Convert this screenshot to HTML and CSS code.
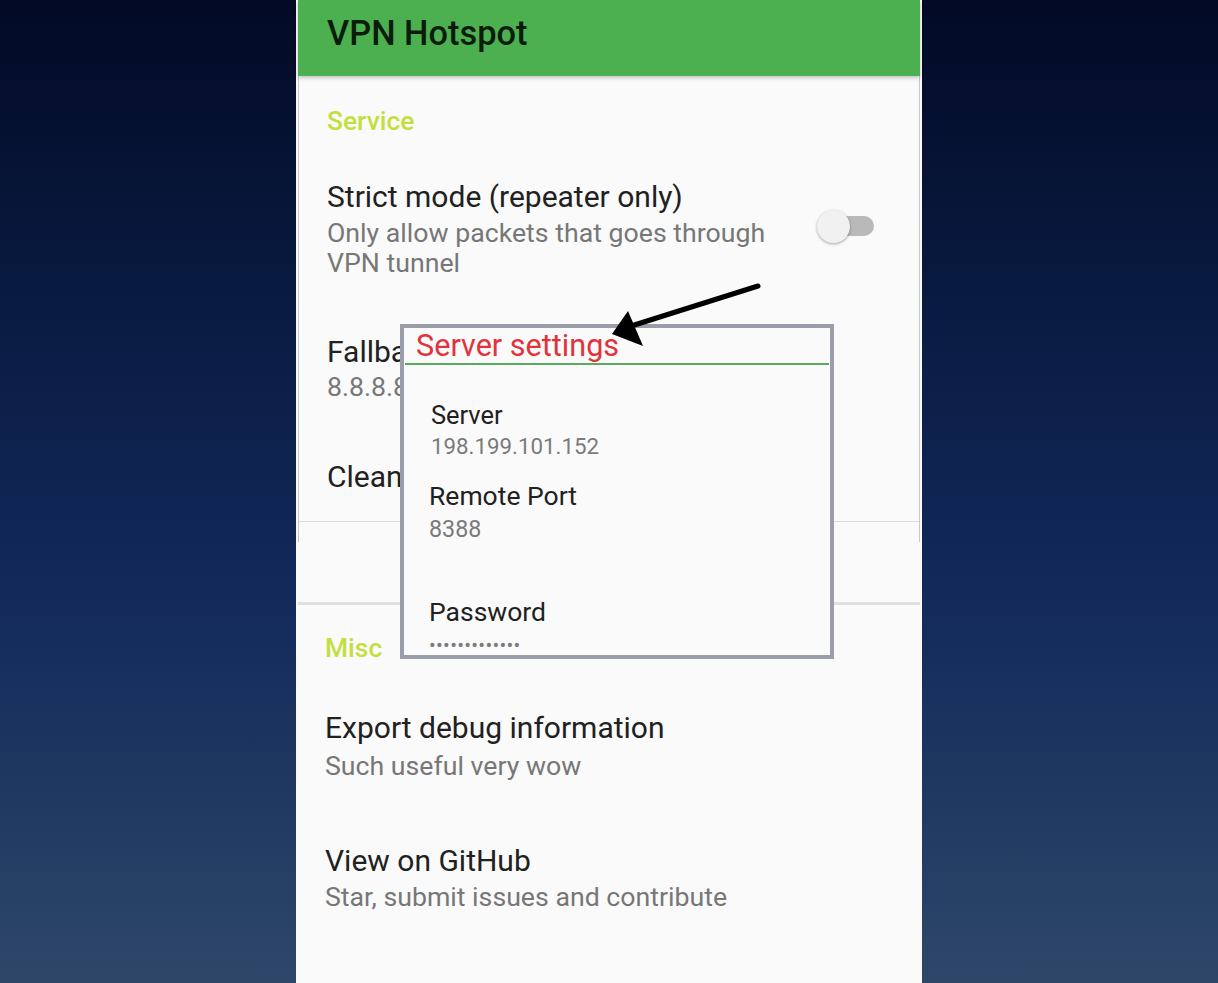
FILE: index.html
```html
<!DOCTYPE html>
<html lang="en">
<head>
<meta charset="utf-8">
<title>VPN Hotspot</title>
<link rel="stylesheet" href="styles.css">
</head>
<body>
<div class="phone">
  <div class="card">
    <header class="appbar"><h1>VPN Hotspot</h1></header>
    <div class="cat cat-service">Service</div>
    <div class="item item-strict">
      <div class="item-text">
        <div class="title">Strict mode (repeater only)</div>
        <div class="summary">Only allow packets that goes through<br>VPN tunnel</div>
      </div>
      <div class="switch"><span class="track"></span><span class="thumb"></span></div>
    </div>
    <div class="item item-fallback">
      <div class="title">Fallback DNS server</div>
      <div class="summary">8.8.8.8</div>
    </div>
    <div class="item item-clean">
      <div class="title">Clean/reapply routing rules</div>
    </div>
    <div class="card-divider"></div>
  </div>
  <div class="section-divider"></div>
  <div class="cat cat-misc">Misc</div>
  <div class="item item-export">
    <div class="title">Export debug information</div>
    <div class="summary">Such useful very wow</div>
  </div>
  <div class="item item-github">
    <div class="title">View on GitHub</div>
    <div class="summary">Star, submit issues and contribute</div>
  </div>

  <div class="dialog">
    <div class="dialog-title">Server settings</div>
    <div class="field field-server">
      <div class="f-label">Server</div>
      <div class="f-value">198.199.101.152</div>
    </div>
    <div class="field field-port">
      <div class="f-label">Remote Port</div>
      <div class="f-value">8388</div>
    </div>
    <div class="field field-pass">
      <div class="f-label">Password</div>
      <div class="f-dots">•••••••••••••</div>
    </div>
  </div>

  <svg class="arrow" width="170" height="80" viewBox="0 0 170 80">
    <line x1="162" y1="6" x2="32" y2="47" stroke="#000" stroke-width="5" stroke-linecap="round"/>
    <polygon points="16,54 32,31 47,66" fill="#000"/>
  </svg>
</div>
</body>
</html>
```

FILE: styles.css
```css
* { box-sizing: border-box; margin: 0; padding: 0; }

html, body { height: 100%; }

body {
  font-family: Roboto, "Noto Sans", Arial, sans-serif;
  background: linear-gradient(180deg, #020a25 0%, #0a1d45 35%, #12295a 60%, #1e3861 80%, #2e4769 100%);
  display: flex;
  justify-content: center;
  overflow: hidden;
}

.phone {
  position: relative;
  width: 626px;
  height: 983px;
  background: #fafafa;
}

.card {
  margin: 0 2px;
  height: 542px;
  border-left: 1px solid #c6c8cc;
  border-right: 1px solid #c6c8cc;
  display: flex;
  flex-direction: column;
}

.appbar {
  height: 76px;
  margin: 0 -1px;
  background: #4caf50;
  box-shadow: 0 2px 4px rgba(0,0,0,0.22);
  padding-left: 29px;
  position: relative;
  z-index: 1;
}

.appbar h1 {
  font-size: 34.4px;
  font-weight: 500;
  line-height: 66px;
  color: #0b1c0b;
}

.cat {
  font-size: 26.4px;
  font-weight: 500;
  line-height: 30px;
  color: #c3df3f;
}

.cat-service { margin-top: 30px; padding-left: 28px; }

.item { padding-left: 28px; }

.title {
  font-size: 30px;
  line-height: 34px;
  color: #212121;
  white-space: nowrap;
}

.summary {
  font-size: 26.7px;
  line-height: 30px;
  color: #777;
  margin-top: 4px;
  white-space: nowrap;
}

.item-strict {
  margin-top: 44px;
  display: flex;
  align-items: center;
  padding-right: 45px;
}
.item-strict .item-text { flex: 1; min-width: 0; }

.switch {
  position: relative;
  flex: none;
  width: 58px;
  height: 34px;
  margin-top: -6px;
}
.switch .track {
  position: absolute;
  left: 12px; right: 0; top: 7px;
  height: 20px;
  border-radius: 10px;
  background: #b9b9b9;
}
.switch .thumb {
  position: absolute;
  left: 1px; top: 1px;
  width: 33px; height: 33px;
  border-radius: 50%;
  background: #f1f1f1;
  box-shadow: 0 1px 3px rgba(0,0,0,0.35);
}

.item-fallback { margin-top: 57px; }
.item-fallback .summary { margin-top: 3px; }
.item-clean { margin-top: 58px; }

.card-divider {
  margin-top: 27px;
  height: 1px;
  background: #dcdcdc;
}

.section-divider {
  margin: 60px 2px 0;
  height: 3px;
  background: #e0e0e0;
}

.cat-misc { margin-top: 28px; padding-left: 29px; }

.item-export { margin-top: 48px; padding-left: 29px; }
.item-export .summary { margin-top: 6px; }
.item-github { margin-top: 63px; padding-left: 29px; }
.item-github .summary { margin-top: 4px; }

/* overlay dialog */
.dialog {
  position: absolute;
  left: 104px;
  top: 324px;
  width: 434px;
  height: 335px;
  border: 4px solid #9a9ea8;
  background: #fafafa;
  overflow: hidden;
  z-index: 2;
}

.dialog-title {
  height: 37px;
  margin: 0 1px;
  border-bottom: 2px solid #5aab5e;
  padding-left: 11px;
  font-size: 30.6px;
  line-height: 36px;
  color: #e2333a;
  white-space: nowrap;
}

.field { padding-left: 25px; }
.field-server { padding-left: 27px; margin-top: 34px; }
.field-port { margin-top: 20px; }
.field-pass { margin-top: 53px; }

.f-label {
  font-size: 26.5px;
  line-height: 32px;
  color: #212121;
}
.field-server .f-label { font-size: 25.4px; margin-bottom: 1px; }
.field-port .f-label { margin-bottom: 3px; }

.f-value {
  font-size: 22.3px;
  line-height: 28px;
  color: #7a7a7a;
}
.field-port .f-value { font-size: 23.3px; }

.f-dots {
  font-size: 20px;
  line-height: 20px;
  letter-spacing: 0.3px;
  color: #7c7c7c;
  margin-top: 7px;
}

.arrow {
  position: absolute;
  left: 300px;
  top: 280px;
  z-index: 3;
}
```
